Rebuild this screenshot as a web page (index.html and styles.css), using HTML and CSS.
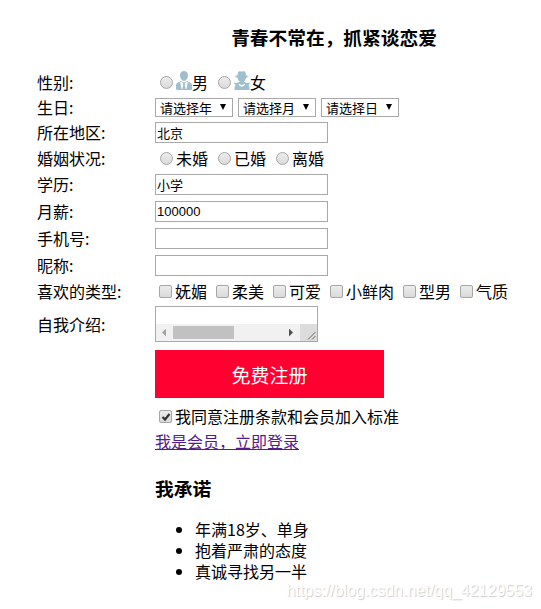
FILE: index.html
```html
<!DOCTYPE html>
<html lang="zh-CN">
<head>
    <meta charset="UTF-8">
    <meta name="viewport" content="width=device-width, initial-scale=1.0">
    <title>注册页面</title>
    <link rel="stylesheet" href="styles.css">
</head>
<body>
    <form class="register">
        <h3 class="title">青春不常在，抓紧谈恋爱</h3>

        <span class="name" id="sex-name">性别:</span>
        <div class="options sex" role="group" aria-labelledby="sex-name">
            <label>
                <input type="radio" name="sex">
                <svg class="icon" viewBox="0 0 16 19" aria-hidden="true">
                    <path fill="#a0bfce" d="M8 0C5.300 0 4 1.800 4 4.300C4 7 5.700 10 8 10S12 7 12 4.300C12 1.800 10.700 0 8 0Z"/>
                    <path fill="#a0bfce" d="M5 10L1.500 11.700Q0 12.500 0 14V17.500Q0 19 1.500 19H14.500Q16 19 16 17.500V14Q16 12.500 14.500 11.700L11 10L8 11.500Z"/>
                    <path fill="#fff" d="M5 10.500L7.300 12L6.800 13.300L7.200 14L6.300 18H5.500L4.300 12ZM11 10.500L8.700 12L9.200 13.300L8.800 14L9.700 18H10.500L11.700 12Z"/>
                </svg>男
            </label>
            <label>
                <input type="radio" name="sex">
                <svg class="icon" viewBox="0 0 16 19" aria-hidden="true">
                    <path fill="#a0bfce" d="M3.500 4.300L4 1.500Q4.500 0 6 0.200Q7.500 0.700 9 0.200Q11 0 11.500 1.500L12 4.300L14 5Q13.500 6.500 12 6.700Q11.500 10 9.500 11H6Q4 10 3.500 6.700Q1.500 6.500 1 5Z"/>
                    <path fill="#a0bfce" d="M0 11.500Q2.500 12.300 4 11.500L6 10.500H9.500L11.500 11.500Q13 12.300 15.500 11.500Q16 13 14.500 14L15.500 16.500V19H0.500V16.500L1.500 14Q0 13 0 11.500Z"/>
                    <path fill="#fff" d="M4.500 12.800L7.800 14L11.100 12.800L10.500 14.500L7.800 15.700L5.200 14.500Z"/>
                </svg>女
            </label>
        </div>

        <span class="name" id="birth-name">生日:</span>
        <div class="selects" role="group" aria-labelledby="birth-name">
            <select aria-label="年"><option>请选择年</option></select>
            <select aria-label="月"><option>请选择月</option></select>
            <select aria-label="日"><option>请选择日</option></select>
        </div>

        <label class="name" for="area">所在地区:</label>
        <div><input class="text" type="text" id="area" value="北京"></div>

        <span class="name" id="marry-name">婚姻状况:</span>
        <div class="options" role="group" aria-labelledby="marry-name">
            <label><input type="radio" name="marry">未婚</label>
            <label><input type="radio" name="marry">已婚</label>
            <label><input type="radio" name="marry">离婚</label>
        </div>

        <label class="name" for="edu">学历:</label>
        <div><input class="text" type="text" id="edu" value="小学"></div>

        <label class="name" for="salary">月薪:</label>
        <div><input class="text" type="text" id="salary" value="100000"></div>

        <label class="name" for="phone">手机号:</label>
        <div><input class="text" type="text" id="phone"></div>

        <label class="name" for="nick">昵称:</label>
        <div><input class="text" type="text" id="nick"></div>

        <span class="name" id="like-name">喜欢的类型:</span>
        <div class="options" role="group" aria-labelledby="like-name">
            <label><input type="checkbox" name="like">妩媚</label>
            <label><input type="checkbox" name="like">柔美</label>
            <label><input type="checkbox" name="like">可爱</label>
            <label><input type="checkbox" name="like">小鲜肉</label>
            <label><input type="checkbox" name="like">型男</label>
            <label><input type="checkbox" name="like">气质</label>
        </div>

        <label class="name" for="intro">自我介绍:</label>
        <div>
            <div class="intro">
                <textarea id="intro" rows="1"></textarea>
                <div class="scrollbar" aria-hidden="true">
                    <span class="arrow left"></span>
                    <span class="track"><span class="thumb"></span></span>
                    <span class="arrow right"></span>
                    <svg class="grip" viewBox="0 0 17 17">
                        <path d="M8 15.500L15.500 8M12 15.500L15.500 12" stroke="#666" fill="none"/>
                    </svg>
                </div>
            </div>
        </div>

        <div class="value"><button type="submit" class="submit">免费注册</button></div>

        <div class="value options">
            <label><input type="checkbox" checked>我同意注册条款和会员加入标准</label>
        </div>

        <div class="value"><a href="#">我是会员，立即登录</a></div>

        <div class="value promise">
            <h3>我承诺</h3>
            <ul>
                <li>年满18岁、单身</li>
                <li>抱着严肃的态度</li>
                <li>真诚寻找另一半</li>
            </ul>
        </div>
    </form>
    <div class="watermark">https://blog.csdn.net/qq_42129553</div>
</body>
</html>
```
FILE: styles.css
```css
* {
    box-sizing: border-box;
}
body {
    position: relative;
    min-height: 100vh;
    margin: 0;
    background-color: #fff;
    color: #000;
    font-family: "Noto Sans CJK SC", sans-serif;
    font-size: 16px;
    line-height: 21px;
}
.register {
    display: grid;
    grid-template-columns: 118px 1fr;
    row-gap: 4px;
    align-items: center;
    padding: 23px 28px 0 37px;
}
h3 {
    margin: 0;
    line-height: 28px;
}
.title {
    grid-column: 2;
    margin-bottom: 16px;
    text-align: center;
}
.value {
    grid-column: 2;
}
.options {
    display: flex;
    gap: 5px;
}
.options label {
    display: flex;
    align-items: center;
    white-space: nowrap;
}
.sex {
    min-height: 23px;
    align-items: center;
}
.icon {
    width: 16px;
    height: 19px;
    margin-bottom: 4px;
}
input[type="radio"],
input[type="checkbox"] {
    appearance: none;
    flex: none;
    width: 13px;
    height: 13px;
    margin: 0 3px 0 4px;
    border: 1px solid #a6a6a6;
    border-radius: 2px;
    background: linear-gradient(#ececec, #dadada);
}
input[type="radio"] {
    margin-left: 5px;
    border-radius: 50%;
}
input[type="checkbox"]:checked {
    background: url("data:image/svg+xml,%3Csvg xmlns='http://www.w3.org/2000/svg' viewBox='0 0 10 10'%3E%3Cpath d='M1.500 5L4 7.500L8.500 2' fill='none' stroke='%23333' stroke-width='2.200'/%3E%3C/svg%3E") center / 10px 10px no-repeat, linear-gradient(#ececec, #dadada);
}
.selects {
    display: flex;
    align-items: center;
    gap: 5px;
}
select {
    appearance: none;
    width: 78px;
    height: 19px;
    padding: 0 0 0 4px;
    border: 1px solid #a9a9a9;
    border-radius: 0;
    background: url("data:image/svg+xml,%3Csvg xmlns='http://www.w3.org/2000/svg' viewBox='0 0 6 6'%3E%3Cpath d='M0 0H6L3 6Z'/%3E%3C/svg%3E") right 6px top 5px / 6px 6px no-repeat #fff;
    color: #000;
    font: 13px "Noto Sans CJK SC", sans-serif;
    line-height: 17px;
}
.name {
    line-height: 19px;
}
.text {
    display: block;
    width: 173px;
    height: 21px;
    margin: 1px 0;
    padding: 1px;
    border: 1px solid #a9a9a9;
    font: 13px "Liberation Sans", "Noto Sans CJK SC", sans-serif;
}
.intro {
    width: 163px;
    border: 1px solid #a9a9a9;
}
.intro textarea {
    display: block;
    width: 100%;
    height: 17px;
    padding: 0 2px;
    border: 0;
    resize: none;
    overflow: hidden;
    font: 13px "Liberation Mono", "Noto Sans CJK SC", monospace;
}
.scrollbar {
    display: flex;
    align-items: center;
    height: 17px;
    background-color: #f1f1f1;
}
.arrow {
    width: 4px;
    height: 8px;
    margin: 0 7px 0 6px;
    background-color: #a3a3a3;
    clip-path: polygon(100% 0, 100% 100%, 0 50%);
}
.arrow.right {
    background-color: #505050;
    clip-path: polygon(0 0, 0 100%, 100% 50%);
}
.track {
    flex: 1;
}
.thumb {
    display: block;
    width: 61px;
    height: 13px;
    background-color: #c1c1c1;
}
.grip {
    width: 17px;
    height: 17px;
    background-color: #dcdcdc;
}
.submit {
    display: block;
    width: 229px;
    height: 48px;
    margin: 4px 0;
    padding: 0;
    border: 0;
    background-color: #ff0030;
    color: #fff;
    font: 19px "Noto Sans CJK SC", sans-serif;
}
a {
    color: #551a8b;
}
.promise {
    margin-top: 18px;
}
.promise ul {
    margin: 17px 0 0;
    padding-left: 40px;
}
.watermark {
    position: absolute;
    right: 9px;
    bottom: 8px;
    color: #fff;
    font-family: "Liberation Sans", Arial, sans-serif;
    text-shadow: 1px 1px 1px #ccc;
}
```
